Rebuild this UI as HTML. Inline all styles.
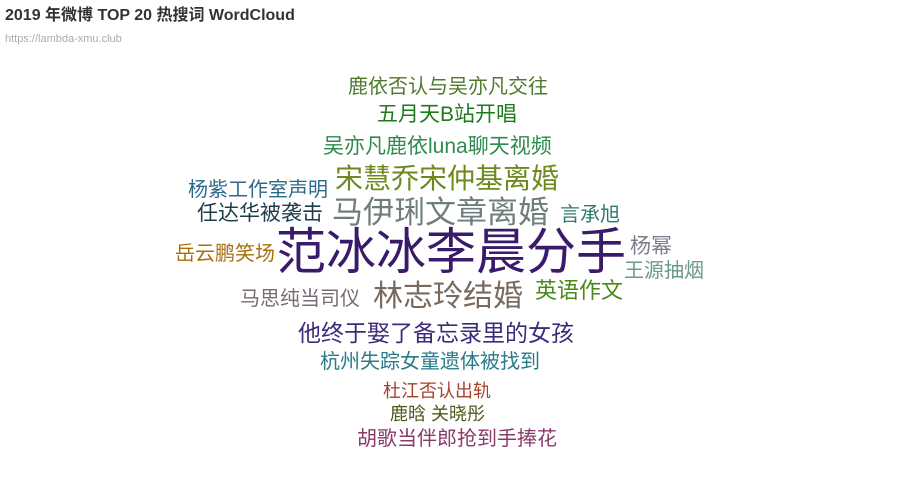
<!DOCTYPE html>
<html><head><meta charset="utf-8"><style>
html,body{margin:0;padding:0;background:#fff;width:900px;height:500px;overflow:hidden;position:relative}
body{font-family:"Liberation Sans","Noto Sans CJK SC",sans-serif}
.w{position:absolute;white-space:nowrap;line-height:1}
</style></head><body>
<div class="w" style="left:5px;top:8px;font-size:16px;font-weight:bold;color:#333">2019 年微博 TOP 20 热搜词 WordCloud</div>
<div class="w" style="left:5px;top:34px;font-size:11px;color:#aaa">https://lambda-xmu.club</div>

<div class="w" style="left:348px;top:77px;font-size:20px;color:#4f7a2e">鹿依否认与吴亦凡交往</div>
<div class="w" style="left:377px;top:104px;font-size:21px;color:#1d7a1d">五月天B站开唱</div>
<div class="w" style="left:323px;top:136px;font-size:21px;color:#2e8a4f">吴亦凡鹿依luna聊天视频</div>
<div class="w" style="left:335px;top:165px;font-size:28px;color:#6e8a1e">宋慧乔宋仲基离婚</div>
<div class="w" style="left:188px;top:180px;font-size:20px;color:#2d6a8a">杨紫工作室声明</div>
<div class="w" style="left:332px;top:197px;font-size:31px;color:#6f7d7d">马伊琍文章离婚</div>
<div class="w" style="left:197px;top:203px;font-size:21px;color:#1e3d4a">任达华被袭击</div>
<div class="w" style="left:560px;top:205px;font-size:20px;color:#2b7a6a">言承旭</div>
<div class="w" style="left:276px;top:227px;font-size:50px;color:#3a1a6a">范冰冰李晨分手</div>
<div class="w" style="left:175px;top:244px;font-size:20px;color:#a8700c">岳云鹏笑场</div>
<div class="w" style="left:630px;top:236px;font-size:21px;color:#7c7c8c">杨幂</div>
<div class="w" style="left:624px;top:261px;font-size:20px;color:#6a9a8a">王源抽烟</div>
<div class="w" style="left:240px;top:289px;font-size:20px;color:#7a6a75">马思纯当司仪</div>
<div class="w" style="left:373px;top:282px;font-size:30px;color:#7a6a5e">林志玲结婚</div>
<div class="w" style="left:535px;top:280px;font-size:22px;color:#4a8a1a">英语作文</div>
<div class="w" style="left:298px;top:322px;font-size:23px;color:#3e2a7a">他终于娶了备忘录里的女孩</div>
<div class="w" style="left:320px;top:352px;font-size:20px;color:#2a7a8a">杭州失踪女童遗体被找到</div>
<div class="w" style="left:383px;top:382px;font-size:18px;color:#a8402a">杜江否认出轨</div>
<div class="w" style="left:390px;top:405px;font-size:18px;color:#4a5a1a">鹿晗 关晓彤</div>
<div class="w" style="left:357px;top:429px;font-size:20px;color:#8a3a6a">胡歌当伴郎抢到手捧花</div>
</body></html>
